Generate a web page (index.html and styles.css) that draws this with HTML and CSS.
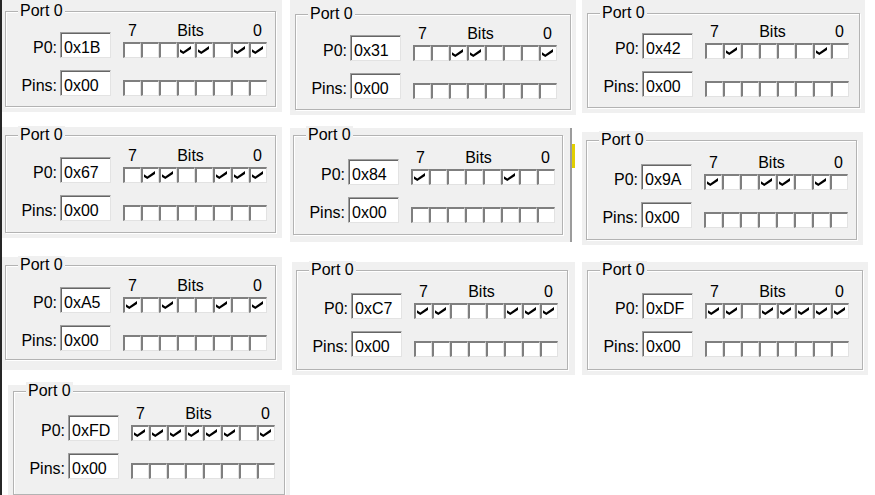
FILE: index.html
```html
<!DOCTYPE html>
<html>
<head>
<meta charset="utf-8">
<title>Port 0</title>
<link rel="stylesheet" href="styles.css">
</head>
<body>
<div class="board">

  <div class="panel p1">
    <div class="gb">
      <span class="legend">Port 0</span>
      <div class="row">
        <span class="lbl">P0:</span><span class="tb">0x1B</span>
        <div class="bits">
          <div class="hdr"><span>7</span><span class="bt">Bits</span><span>0</span></div>
          <div class="boxes"><span class="cb"></span><span class="cb"></span><span class="cb"></span><span class="cb on"></span><span class="cb on"></span><span class="cb"></span><span class="cb on"></span><span class="cb on"></span></div>
        </div>
      </div>
      <div class="row row2">
        <span class="lbl">Pins:</span><span class="tb">0x00</span>
        <div class="bits"><div class="boxes"><span class="cb"></span><span class="cb"></span><span class="cb"></span><span class="cb"></span><span class="cb"></span><span class="cb"></span><span class="cb"></span><span class="cb"></span></div></div>
      </div>
    </div>
  </div>

  <div class="panel p2">
    <div class="gb">
      <span class="legend">Port 0</span>
      <div class="row">
        <span class="lbl">P0:</span><span class="tb">0x31</span>
        <div class="bits">
          <div class="hdr"><span>7</span><span class="bt">Bits</span><span>0</span></div>
          <div class="boxes"><span class="cb"></span><span class="cb"></span><span class="cb on"></span><span class="cb on"></span><span class="cb"></span><span class="cb"></span><span class="cb"></span><span class="cb on"></span></div>
        </div>
      </div>
      <div class="row row2">
        <span class="lbl">Pins:</span><span class="tb">0x00</span>
        <div class="bits"><div class="boxes"><span class="cb"></span><span class="cb"></span><span class="cb"></span><span class="cb"></span><span class="cb"></span><span class="cb"></span><span class="cb"></span><span class="cb"></span></div></div>
      </div>
    </div>
  </div>

  <div class="panel p3">
    <div class="gb">
      <span class="legend">Port 0</span>
      <div class="row">
        <span class="lbl">P0:</span><span class="tb">0x42</span>
        <div class="bits">
          <div class="hdr"><span>7</span><span class="bt">Bits</span><span>0</span></div>
          <div class="boxes"><span class="cb"></span><span class="cb on"></span><span class="cb"></span><span class="cb"></span><span class="cb"></span><span class="cb"></span><span class="cb on"></span><span class="cb"></span></div>
        </div>
      </div>
      <div class="row row2">
        <span class="lbl">Pins:</span><span class="tb">0x00</span>
        <div class="bits"><div class="boxes"><span class="cb"></span><span class="cb"></span><span class="cb"></span><span class="cb"></span><span class="cb"></span><span class="cb"></span><span class="cb"></span><span class="cb"></span></div></div>
      </div>
    </div>
  </div>

  <div class="panel p4">
    <div class="gb">
      <span class="legend">Port 0</span>
      <div class="row">
        <span class="lbl">P0:</span><span class="tb">0x67</span>
        <div class="bits">
          <div class="hdr"><span>7</span><span class="bt">Bits</span><span>0</span></div>
          <div class="boxes"><span class="cb"></span><span class="cb on"></span><span class="cb on"></span><span class="cb"></span><span class="cb"></span><span class="cb on"></span><span class="cb on"></span><span class="cb on"></span></div>
        </div>
      </div>
      <div class="row row2">
        <span class="lbl">Pins:</span><span class="tb">0x00</span>
        <div class="bits"><div class="boxes"><span class="cb"></span><span class="cb"></span><span class="cb"></span><span class="cb"></span><span class="cb"></span><span class="cb"></span><span class="cb"></span><span class="cb"></span></div></div>
      </div>
    </div>
  </div>

  <div class="panel p5">
    <div class="gb">
      <span class="legend">Port 0</span>
      <div class="row">
        <span class="lbl">P0:</span><span class="tb">0x84</span>
        <div class="bits">
          <div class="hdr"><span>7</span><span class="bt">Bits</span><span>0</span></div>
          <div class="boxes"><span class="cb on"></span><span class="cb"></span><span class="cb"></span><span class="cb"></span><span class="cb"></span><span class="cb on"></span><span class="cb"></span><span class="cb"></span></div>
        </div>
      </div>
      <div class="row row2">
        <span class="lbl">Pins:</span><span class="tb">0x00</span>
        <div class="bits"><div class="boxes"><span class="cb"></span><span class="cb"></span><span class="cb"></span><span class="cb"></span><span class="cb"></span><span class="cb"></span><span class="cb"></span><span class="cb"></span></div></div>
      </div>
    </div>
  </div>

  <div class="panel p6">
    <div class="gb">
      <span class="legend">Port 0</span>
      <div class="row">
        <span class="lbl">P0:</span><span class="tb">0x9A</span>
        <div class="bits">
          <div class="hdr"><span>7</span><span class="bt">Bits</span><span>0</span></div>
          <div class="boxes"><span class="cb on"></span><span class="cb"></span><span class="cb"></span><span class="cb on"></span><span class="cb on"></span><span class="cb"></span><span class="cb on"></span><span class="cb"></span></div>
        </div>
      </div>
      <div class="row row2">
        <span class="lbl">Pins:</span><span class="tb">0x00</span>
        <div class="bits"><div class="boxes"><span class="cb"></span><span class="cb"></span><span class="cb"></span><span class="cb"></span><span class="cb"></span><span class="cb"></span><span class="cb"></span><span class="cb"></span></div></div>
      </div>
    </div>
  </div>

  <div class="panel p7">
    <div class="gb">
      <span class="legend">Port 0</span>
      <div class="row">
        <span class="lbl">P0:</span><span class="tb">0xA5</span>
        <div class="bits">
          <div class="hdr"><span>7</span><span class="bt">Bits</span><span>0</span></div>
          <div class="boxes"><span class="cb on"></span><span class="cb"></span><span class="cb on"></span><span class="cb"></span><span class="cb"></span><span class="cb on"></span><span class="cb"></span><span class="cb on"></span></div>
        </div>
      </div>
      <div class="row row2">
        <span class="lbl">Pins:</span><span class="tb">0x00</span>
        <div class="bits"><div class="boxes"><span class="cb"></span><span class="cb"></span><span class="cb"></span><span class="cb"></span><span class="cb"></span><span class="cb"></span><span class="cb"></span><span class="cb"></span></div></div>
      </div>
    </div>
  </div>

  <div class="panel p8">
    <div class="gb">
      <span class="legend">Port 0</span>
      <div class="row">
        <span class="lbl">P0:</span><span class="tb">0xC7</span>
        <div class="bits">
          <div class="hdr"><span>7</span><span class="bt">Bits</span><span>0</span></div>
          <div class="boxes"><span class="cb on"></span><span class="cb on"></span><span class="cb"></span><span class="cb"></span><span class="cb"></span><span class="cb on"></span><span class="cb on"></span><span class="cb on"></span></div>
        </div>
      </div>
      <div class="row row2">
        <span class="lbl">Pins:</span><span class="tb">0x00</span>
        <div class="bits"><div class="boxes"><span class="cb"></span><span class="cb"></span><span class="cb"></span><span class="cb"></span><span class="cb"></span><span class="cb"></span><span class="cb"></span><span class="cb"></span></div></div>
      </div>
    </div>
  </div>

  <div class="panel p9">
    <div class="gb">
      <span class="legend">Port 0</span>
      <div class="row">
        <span class="lbl">P0:</span><span class="tb">0xDF</span>
        <div class="bits">
          <div class="hdr"><span>7</span><span class="bt">Bits</span><span>0</span></div>
          <div class="boxes"><span class="cb on"></span><span class="cb on"></span><span class="cb"></span><span class="cb on"></span><span class="cb on"></span><span class="cb on"></span><span class="cb on"></span><span class="cb on"></span></div>
        </div>
      </div>
      <div class="row row2">
        <span class="lbl">Pins:</span><span class="tb">0x00</span>
        <div class="bits"><div class="boxes"><span class="cb"></span><span class="cb"></span><span class="cb"></span><span class="cb"></span><span class="cb"></span><span class="cb"></span><span class="cb"></span><span class="cb"></span></div></div>
      </div>
    </div>
  </div>

  <div class="panel p10">
    <div class="gb">
      <span class="legend">Port 0</span>
      <div class="row">
        <span class="lbl">P0:</span><span class="tb">0xFD</span>
        <div class="bits">
          <div class="hdr"><span>7</span><span class="bt">Bits</span><span>0</span></div>
          <div class="boxes"><span class="cb on"></span><span class="cb on"></span><span class="cb on"></span><span class="cb on"></span><span class="cb on"></span><span class="cb on"></span><span class="cb"></span><span class="cb on"></span></div>
        </div>
      </div>
      <div class="row row2">
        <span class="lbl">Pins:</span><span class="tb">0x00</span>
        <div class="bits"><div class="boxes"><span class="cb"></span><span class="cb"></span><span class="cb"></span><span class="cb"></span><span class="cb"></span><span class="cb"></span><span class="cb"></span><span class="cb"></span></div></div>
      </div>
    </div>
  </div>

</div>
</body>
</html>
```

FILE: styles.css
```css
* { box-sizing: border-box; }

html, body {
  margin: 0;
  overflow: hidden;
  background: #ffffff;
}

body {
  font-family: "Liberation Sans", Arial, sans-serif;
  font-size: 16px;
  color: #000000;
}

.board {
  display: grid;
  grid-template-columns: 288px 292px 1fr;
  grid-template-rows: 127px 130px 128px 110px;
  height: 495px;
  border-left: 2px solid #262626;
  align-items: start;
  justify-items: start;
}

.panel {
  background: #f0f0f0;
}

.gb {
  position: relative;
  border: 1px solid #b3b3b3;
  box-shadow: inset 1px 1px 0 #ffffff, 1px 1px 0 #ffffff;
  padding-top: 11px;
}

.legend {
  position: absolute;
  top: -10px;
  left: 12px;
  padding: 0 2px;
  background: #f0f0f0;
  line-height: 18px;
  white-space: nowrap;
}

.row {
  display: flex;
  align-items: flex-end;
}

.row2 {
  margin-top: 12px;
}

.lbl {
  width: 51px;
  height: 26px;
  margin-right: 3px;
  padding-top: 6px;
  line-height: 19px;
  text-align: right;
  white-space: nowrap;
}

.tb {
  width: 51px;
  height: 26px;
  background: #ffffff;
  border-top: 1px solid #a0a0a0;
  border-left: 1px solid #a0a0a0;
  border-right: 1px solid #e3e3e3;
  border-bottom: 1px solid #e3e3e3;
  box-shadow: inset 1px 1px 0 #666666;
  padding: 5px 0 0 3px;
  line-height: 19px;
  white-space: nowrap;
}

.bits {
  margin-left: 12px;
  width: 144px;
}

.hdr {
  display: flex;
  justify-content: space-between;
  line-height: 16px;
  margin-bottom: 3px;
  padding: 0 5px;
}

.bt {
  margin-right: 9px;
}

.boxes {
  display: flex;
}

.cb {
  position: relative;
  width: 18px;
  height: 16px;
  background: #ffffff;
  border-top: 2px solid #7f7f7f;
  border-left: 2px solid #7f7f7f;
  border-right: 1px solid #e2e2e2;
  border-bottom: 1px solid #e2e2e2;
}

.cb.on::after {
  content: "";
  position: absolute;
  left: 1px;
  top: 2px;
  width: 11px;
  height: 8px;
  background: #000000;
  clip-path: polygon(0% 40%, 30% 68%, 100% 0%, 100% 38%, 30% 100%, 0% 76%);
}

/* individual screenshot fragments */
.p1 { width: 280px; height: 112px; padding: 11px 0 0 3px; }
.p1 .gb { width: 271px; height: 96px; }

.p2 { width: 286px; height: 115px; padding: 14px 0 0 5px; }
.p2 .gb { width: 276px; height: 96px; }

.p3 { width: 283px; height: 113px; padding: 13px 0 0 5px; }
.p3 .gb { width: 273px; height: 95px; padding-top: 10px; }

.p4 { width: 280px; height: 111px; padding: 8px 0 0 3px; }
.p4 .gb { width: 271px; height: 98px; padding-top: 12px; }

.p5 {
  position: relative;
  margin-top: 1px;
  width: 282px;
  height: 114px;
  padding: 7px 0 0 3px;
  border-right: 2px solid #9c9c9c;
}
.p5 .gb { width: 270px; height: 100px; padding-top: 14px; }
.p5::after {
  content: "";
  position: absolute;
  right: -5px;
  top: 16px;
  width: 3px;
  height: 24px;
  background: #e2cf00;
}

.p6 { margin-top: 5px; width: 281px; height: 113px; padding: 8px 0 0 4px; }
.p6 .gb { width: 271px; height: 100px; padding-top: 14px; }

.p7 { width: 280px; height: 113px; padding: 8px 0 0 3px; }
.p7 .gb { width: 271px; height: 95px; padding-top: 12px; }

.p8 { margin: 5px 0 0 2px; width: 283px; height: 113px; padding: 8px 0 0 4px; }
.p8 .gb { width: 272px; height: 100px; padding-top: 13px; }

.p9 { margin-top: 5px; width: 286px; height: 113px; padding: 8px 0 0 5px; }
.p9 .gb { width: 276px; height: 100px; padding-top: 13px; }

.p10 { margin-left: 6px; width: 282px; height: 110px; padding: 6px 0 0 5px; }
.p10 .gb { width: 272px; height: 104px; padding-top: 14px; }
```
